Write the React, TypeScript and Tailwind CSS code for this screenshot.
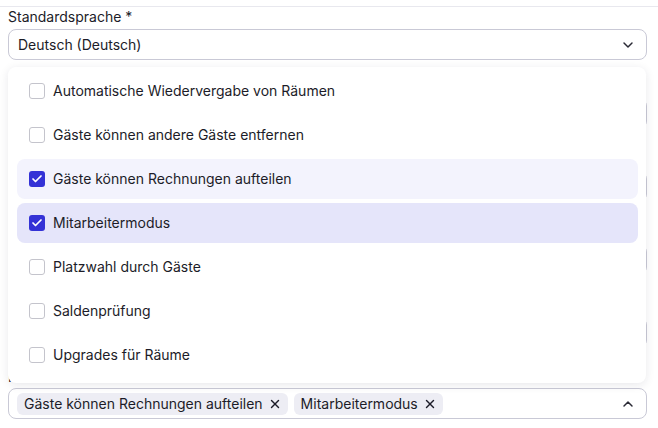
import { ChevronDown, ChevronUp, X, Check } from "lucide-react"

const options = [
  { label: "Automatische Wiedervergabe von Räumen", checked: false },
  { label: "Gäste können andere Gäste entfernen", checked: false },
  { label: "Gäste können Rechnungen aufteilen", checked: true },
  { label: "Mitarbeitermodus", checked: true, active: true },
  { label: "Platzwahl durch Gäste", checked: false },
  { label: "Saldenprüfung", checked: false },
  { label: "Upgrades für Räume", checked: false },
]

function HiddenField() {
  // fields that sit behind the open list
  return (
    <div className="flex flex-col gap-[2px]">
      <div className="h-5 text-sm text-[#1f1f2e]">Feld *</div>
      <div className="h-[31px] rounded-lg border border-[#c9c9d6] bg-white" />
    </div>
  )
}

export default function App() {
  return (
    <div
      className="relative w-[658px] h-[428px] bg-white px-2 text-[#1c1c28] overflow-hidden"
      style={{ fontFamily: "Inter, 'Noto Sans', sans-serif" }}
    >
      <div className="h-[7px] border-b border-[#e8e8ee] -mx-2" />

      {/* Standardsprache */}
      <div className="flex flex-col gap-[2px] w-[639px]">
        <label className="h-5 text-sm leading-5">Standardsprache *</label>
        <div className="h-[31px] rounded-lg border border-[#c9c9d6] flex items-center justify-between pl-[9px] pr-[10px] text-sm">
          <span>Deutsch (Deutsch)</span>
          <ChevronDown size={16} strokeWidth={2.2} className="text-[#2a2a35]" />
        </div>
      </div>

      <div className="flex flex-col gap-[20px] pt-[16px] w-[639px] h-[307px]">
        <HiddenField />
        <HiddenField />
        <HiddenField />
        <HiddenField />
      </div>

      {/* Multiselect */}
      <div className="flex flex-col gap-[1px] w-[639px]">
        <label className="h-5 text-sm leading-5">Funktionen</label>
        <div className="h-[31px] rounded-lg border border-[#c9c9d6] flex items-center justify-between pl-[8px] pr-[10px] text-sm">
          <div className="flex items-center gap-[6px]">
            <span className="h-[22px] flex items-center gap-[5px] rounded-md bg-[#ededf4] pl-[7px] pr-[6px]">
              Gäste können Rechnungen aufteilen
              <X size={14} strokeWidth={2.4} />
            </span>
            <span className="h-[22px] flex items-center gap-[5px] rounded-md bg-[#ededf4] pl-[7px] pr-[6px]">
              Mitarbeitermodus
              <X size={14} strokeWidth={2.4} />
            </span>
          </div>
          <ChevronUp size={16} strokeWidth={2.2} className="text-[#2a2a35]" />
        </div>
      </div>

      {/* Open list */}
      <div className="absolute left-2 top-[67px] w-[638px] rounded-lg bg-white pl-[9px] pr-2 pt-1 pb-2 flex flex-col gap-1 shadow-[0_2px_10px_rgba(30,30,60,0.10)]">
        {options.map((o) => (
          <div
            key={o.label}
            className={`h-10 flex items-center gap-2 pl-3 rounded-lg text-sm ${
              o.active ? "bg-[#e5e5fa]" : o.checked ? "bg-[#f3f3fd]" : ""
            }`}
          >
            {o.checked ? (
              <span className="w-4 h-4 rounded-[3px] bg-[#3432d6] flex items-center justify-center">
                <Check size={12} strokeWidth={3.5} className="text-white" />
              </span>
            ) : (
              <span className="w-4 h-4 rounded-[3px] border border-[#c4c4cc] bg-white" />
            )}
            <span>{o.label}</span>
          </div>
        ))}
      </div>
    </div>
  )
}
